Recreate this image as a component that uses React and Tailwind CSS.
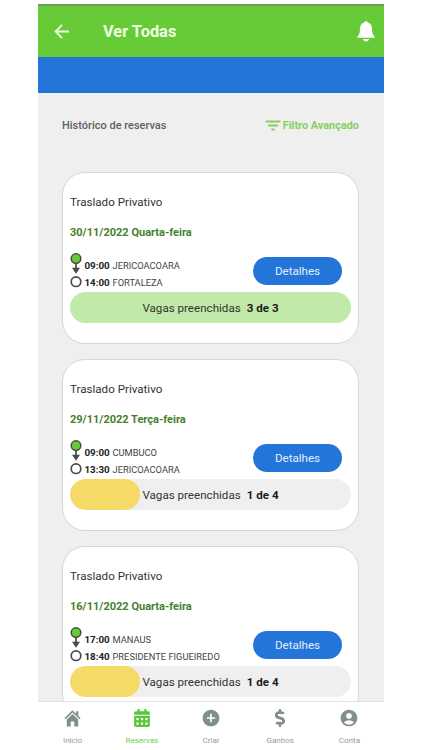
import { FaCalendarAlt, FaDollarSign } from 'react-icons/fa';
import { MdAccountCircle, MdAddCircle } from 'react-icons/md';

const BOOKINGS = [
  {
    id: 1,
    type: 'Traslado Privativo',
    date: '30/11/2022 Quarta-feira',
    from: { time: '09:00', city: 'JERICOACOARA' },
    to: { time: '14:00', city: 'FORTALEZA' },
    filled: 3,
    total: 3,
  },
  {
    id: 2,
    type: 'Traslado Privativo',
    date: '29/11/2022 Terça-feira',
    from: { time: '09:00', city: 'CUMBUCO' },
    to: { time: '13:30', city: 'JERICOACOARA' },
    filled: 1,
    total: 4,
  },
  {
    id: 3,
    type: 'Traslado Privativo',
    date: '16/11/2022 Quarta-feira',
    from: { time: '17:00', city: 'MANAUS' },
    to: { time: '18:40', city: 'PRESIDENTE FIGUEIREDO' },
    filled: 1,
    total: 4,
  },
];

const TABS = [
  { label: 'Inicio', icon: HomeIcon, size: 17 },
  { label: 'Reservas', icon: FaCalendarAlt, size: 18, active: true },
  { label: 'Criar', icon: MdAddCircle, size: 20 },
  { label: 'Ganhos', icon: FaDollarSign, size: 18 },
  { label: 'Conta', icon: MdAccountCircle, size: 20 },
];

function HomeIcon({ size }) {
  return (
    <svg width={size} height={size} viewBox="0 0 17 17" fill="none">
      <path d="M1 8.6 8.5 1.4 16 8.6" stroke="currentColor" strokeWidth="1.6" />
      <path d="M12 1.3h2.3v4.6L12 3.7z" fill="currentColor" />
      <path d="M8.5 3.9 14.2 9.4V16.5h-3.9v-5H6.7v5H2.8V9.4z" fill="currentColor" />
    </svg>
  );
}

function BackIcon() {
  return (
    <svg className="h-4 w-4" viewBox="0 0 16 16" fill="none" stroke="#efffe2" strokeWidth="1.8">
      <path d="M15 7.5H2M8 .9 1.6 7.5 8 14.1" />
    </svg>
  );
}

function BellIcon() {
  return (
    <svg className="h-[21px] w-[18px]" viewBox="0 0 18 21" fill="currentColor">
      <path d="M9 .3c-.9 0-1.500.500-1.700 1.200C4.600 2.200 3.100 4.400 3 7.300c-.1 4.300-.4 6.200-2.400 7.900-.5.500-.3 1.600.6 1.600h15.600c.9 0 1.100-1.100.6-1.600-2-1.700-2.300-3.600-2.400-7.900-.1-2.900-1.600-5.100-4.300-5.800C10.500.8 9.900.3 9 .3z" />
      <path d="M5.900 18h6.200c-.4 1.500-1.600 2.500-3.100 2.500S6.300 19.500 5.900 18z" />
    </svg>
  );
}

function FilterIcon() {
  return (
    <svg className="h-3 w-4" viewBox="0 0 16 12" fill="none" stroke="currentColor" strokeWidth="1.8" strokeLinecap="round">
      <path d="M1.3 1.5h13.400M3.800 5.500h8.400M7 9.500h2" />
    </svg>
  );
}

function RouteIcon() {
  return (
    <svg className="w-3 h-[35px] shrink-0" viewBox="0 0 12 35" fill="none">
      <path d="M6 10v7" stroke="#4a4a4a" strokeWidth="1.7" />
      <path d="M2 14.8h8L6 20.8z" fill="#4a4a4a" />
      <circle cx="6" cy="5.6" r="4.8" fill="#66cb36" stroke="#4a4a4a" strokeWidth="1.5" />
      <circle cx="6" cy="28.7" r="4.8" fill="#fff" stroke="#4a4a4a" strokeWidth="1.7" />
    </svg>
  );
}

function Stop({ stop }) {
  return (
    <div className="flex h-[17.3px] items-baseline whitespace-nowrap leading-[17px]">
      <span className="w-7 text-[9.8px] font-bold text-[#222]">{stop.time}</span>
      <span className="text-[9.3px] text-[#444]">{stop.city}</span>
    </div>
  );
}

function BookingCard({ booking }) {
  const { type, date, from, to, filled, total } = booking;
  const full = filled === total;

  return (
    <div className="h-[172px] shrink-0 rounded-[23px] border border-[#d6d6d6] bg-white px-[7px] pt-[21px]">
      <h3 className="h-4 text-[11.6px] leading-4 text-[#333]">{type}</h3>
      <p className="mt-[15px] h-4 text-[11px] leading-4 font-bold text-[#44812b]">{date}</p>

      <div className="mt-3 flex h-[39px] items-start">
        <RouteIcon />
        <div className="ml-[2.5px] flex-1 pt-1">
          <Stop stop={from} />
          <Stop stop={to} />
        </div>
        <button className="mt-1 mr-[9px] h-[28px] w-[89px] rounded-full bg-[#2375d9] pt-px text-[11.6px] text-[#e4effc]">
          Detalhes
        </button>
      </div>

      <div className={`relative h-[31px] overflow-hidden rounded-full ${full ? 'bg-[#c1e9a9]' : 'bg-[#efefef]'}`}>
        {!full && (
          <div
            className="h-full rounded-full bg-[#f5da68]"
            style={{ width: `${(filled / total) * 100}%` }}
          />
        )}
        <div className="absolute inset-0 flex items-center justify-center gap-[6px] pt-[2px] text-[11.6px] text-[#333]">
          <span>Vagas preenchidas</span>
          <span className="font-bold text-[#1c1c1c]">{filled} de {total}</span>
        </div>
      </div>
    </div>
  );
}

function TabBar() {
  return (
    <nav className="flex h-[49px] shrink-0 border-t border-[#e2e2e2] bg-white">
      {TABS.map(({ label, icon: Icon, size, active }) => (
        <div
          key={label}
          className={`flex flex-1 flex-col items-center pt-[6px] ${active ? 'text-[#5cc63a]' : 'text-[#7f8f8a]'}`}
        >
          <div className="flex h-5 items-center">
            <Icon size={size} />
          </div>
          <span className={`mt-2 text-[8px] leading-[10px] ${active ? 'text-[#70cb4e]' : 'text-[#999]'}`}>{label}</span>
        </div>
      ))}
    </nav>
  );
}

export default function App() {
  return (
    <div className="h-[750px] w-[422px] overflow-hidden bg-white pt-1 pl-[38px] font-[Roboto,sans-serif]">
      <div className="flex h-[746px] w-[346px] flex-col bg-[#efefef]">
        <header className="flex h-[53px] shrink-0 items-center border-t-2 border-[#6f9f58] bg-[#66cb36] pr-[9px] pl-4 text-white">
          <BackIcon />
          <h1 className="ml-[33px] flex-1 pt-[2px] text-[16.4px] font-bold text-[#f0ffe4]">Ver Todas</h1>
          <BellIcon />
        </header>
        <div className="h-9 shrink-0 bg-[#2375d9]" />

        <div className="flex h-[66px] shrink-0 items-center justify-between pt-px pr-[25px] pl-6">
          <span className="text-[11px] font-medium text-[#606060]">Histórico de reservas</span>
          <span className="flex items-center gap-[2px] text-[10.9px] font-bold text-[#85cf60]">
            <FilterIcon />
            Filtro Avançado
          </span>
        </div>

        <main className="flex min-h-0 flex-1 flex-col gap-[15px] overflow-hidden pt-[13px] pr-[25px] pl-6">
          {BOOKINGS.map((booking) => (
            <BookingCard key={booking.id} booking={booking} />
          ))}
        </main>

        <TabBar />
      </div>
    </div>
  );
}
